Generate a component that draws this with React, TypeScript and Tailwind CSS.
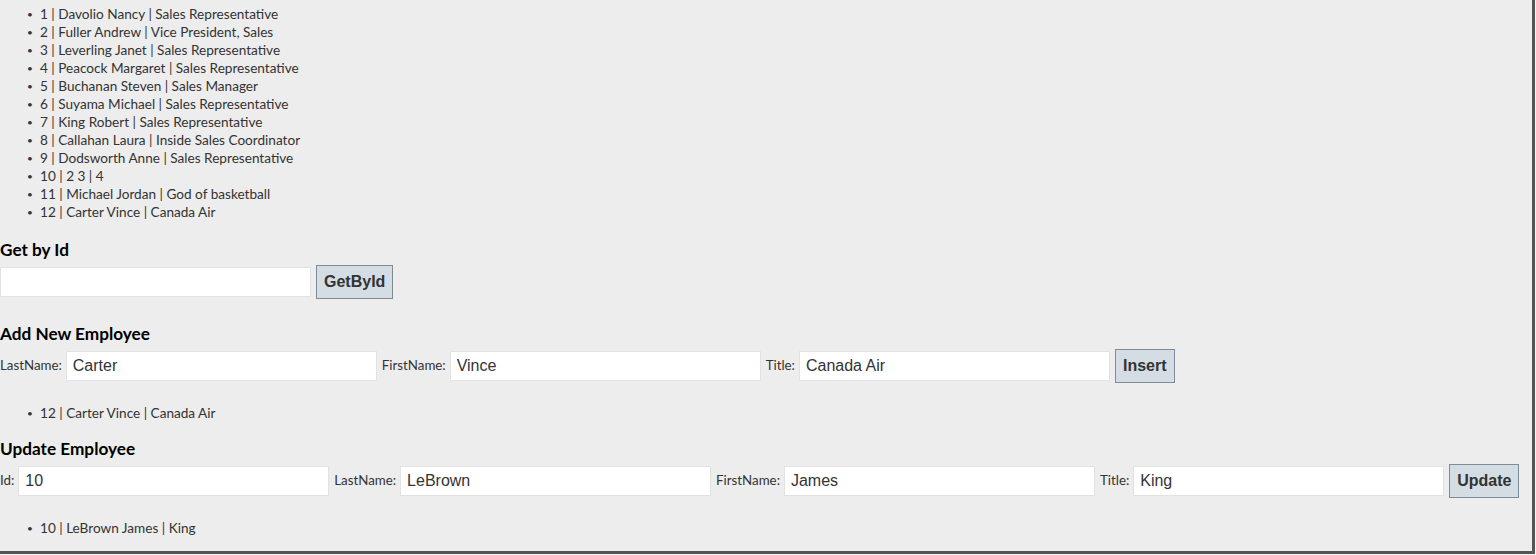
import React from 'react';

const employees = [
  '1 | Davolio Nancy | Sales Representative',
  '2 | Fuller Andrew | Vice President, Sales',
  '3 | Leverling Janet | Sales Representative',
  '4 | Peacock Margaret | Sales Representative',
  '5 | Buchanan Steven | Sales Manager',
  '6 | Suyama Michael | Sales Representative',
  '7 | King Robert | Sales Representative',
  '8 | Callahan Laura | Inside Sales Coordinator',
  '9 | Dodsworth Anne | Sales Representative',
  '10 | 2 3 | 4',
  '11 | Michael Jordan | God of basketball',
  '12 | Carter Vince | Canada Air',
];

function List({ items, className = '' }: { items: string[]; className?: string }) {
  return (
    <ul className={`pl-[27px] text-[13.6px] leading-[18px] text-[#333] ${className}`}>
      {items.map((t) => (
        <li key={t} className="flex items-center">
          <span className="w-[13px] text-[10px]">•</span>
          <span>{t}</span>
        </li>
      ))}
    </ul>
  );
}

function Field({ label, value, first }: { label?: string; value: string; first?: boolean }) {
  return (
    <div className={`flex items-center ${first ? '' : 'ml-[5px]'}`}>
      {label && <span className="mr-[4px] text-[13.3px] text-[#333]">{label}</span>}
      <input
        readOnly
        value={value}
        className="h-[30px] w-[311px] border border-[#e2e2e2] bg-white px-[6px] text-[16px] text-[#333] outline-none font-['Liberation_Sans',Arial,sans-serif]"
      />
    </div>
  );
}

function Btn({ children }: { children: React.ReactNode }) {
  return (
    <button className="ml-[5px] h-[34px] border border-[#7e8c98] bg-[#d4dde4] px-[7px] text-[16px] font-bold text-[#333] font-['Liberation_Sans',Arial,sans-serif]">
      {children}
    </button>
  );
}

function Heading({ children, className = '' }: { children: React.ReactNode; className?: string }) {
  return <h3 className={`text-[17.2px] font-bold leading-[18px] text-black ${className}`}>{children}</h3>;
}

export default function App() {
  return (
    <div className="h-[555px] w-[1536px] bg-[#f4f4f4] font-['Lato','Noto_Sans',sans-serif]">
      <div className="h-[554px] w-[1535px] border-b-[3px] border-r-[3px] border-[#555]">
        <div className="h-full bg-[#ededed] pt-[5px]">
          <List items={employees} />

          <Heading className="mt-[20px]">Get by Id</Heading>
          <div className="mt-[6px] flex items-center">
            <Field value="" first />
            <Btn>GetById</Btn>
          </div>

          <Heading className="mt-[26px]">Add New Employee</Heading>
          <div className="mt-[6px] flex items-center">
            <Field label="LastName:" value="Carter" first />
            <Field label="FirstName:" value="Vince" />
            <Field label="Title:" value="Canada Air" />
            <Btn>Insert</Btn>
          </div>
          <List items={['12 | Carter Vince | Canada Air']} className="mt-[21px]" />

          <Heading className="mt-[18px]">Update Employee</Heading>
          <div className="mt-[6px] flex items-center">
            <Field label="Id:" value="10" first />
            <Field label="LastName:" value="LeBrown" />
            <Field label="FirstName:" value="James" />
            <Field label="Title:" value="King" />
            <Btn>Update</Btn>
          </div>
          <List items={['10 | LeBrown James | King']} className="mt-[21px]" />
        </div>
      </div>
    </div>
  );
}
